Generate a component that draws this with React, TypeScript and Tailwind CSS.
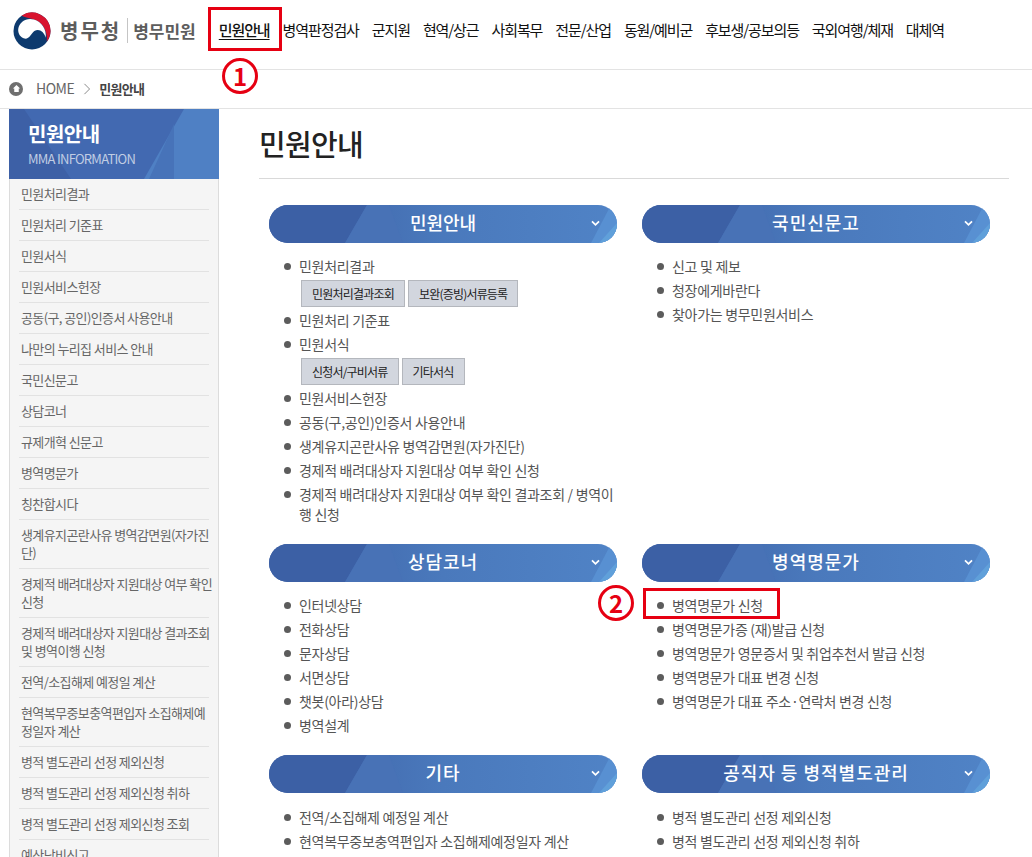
const font = "font-['Noto_Sans_CJK_KR','Noto_Sans',sans-serif]";

const navItems = ['병역판정검사', '군지원', '현역/상근', '사회복무', '전문/산업', '동원/예비군', '후보생/공보의등', '국외여행/체재', '대체역'];

const sideItems = [
  '민원처리결과',
  '민원처리 기준표',
  '민원서식',
  '민원서비스헌장',
  '공동(구, 공인)인증서 사용안내',
  '나만의 누리집 서비스 안내',
  '국민신문고',
  '상담코너',
  '규제개혁 신문고',
  '병역명문가',
  '칭찬합시다',
  '생계유지곤란사유 병역감면원(자가진단)',
  '경제적 배려대상자 지원대상 여부 확인 신청',
  '경제적 배려대상자 지원대상 결과조회 및 병역이행 신청',
  '전역/소집해제 예정일 계산',
  '현역복무중보충역편입자 소집해제예정일자 계산',
  '병적 별도관리 선정 제외신청',
  '병적 별도관리 선정 제외신청 취하',
  '병적 별도관리 선정 제외신청 조회',
  '예산낭비신고',
];

function Logo() {
  return (
    <svg viewBox="0 0 40 40" className="w-[38px] h-[38px]">
      <circle cx="20" cy="20" r="19.5" fill="#0d3a6e" />
      <path d="M9 4A19.5 19.5 0 0 1 39.5 20C39.5 24 38 28 35.5 31C36.5 22 33 13 25 9C19 6.5 13 6 9 4Z" fill="#d8132f" />
      <path d="M5.5 18C6.5 10 15 5.5 22 8C30 10.5 35.5 18 34.5 27C32.5 20 27 17 22.5 20C19 23 17 29 12 28C8 27 5 23 5.5 18Z" fill="#ffffff" />
    </svg>
  );
}

function Pill({ title, wide }: { title: string; wide?: boolean }) {
  return (
    <div className="relative h-[38px] rounded-[19px] overflow-hidden bg-gradient-to-r from-[#3d60a5] via-[#4a79bc] to-[#5083c6] flex items-center justify-center pb-[3px]">
      <svg viewBox="0 0 348 38" preserveAspectRatio="none" className="absolute inset-0 w-full h-full">
        <polygon points="0,0 98,0 76,38 0,38" fill="#3c60a5" />
        <polygon points="98,0 120,0 134,38 76,38" fill="#4872b6" />
        <polygon points="322,38 342,0 348,0 348,38" fill="#5890d2" />
        <polygon points="330,38 348,18 348,38" fill="#60a0da" />
      </svg>
      <span className={`relative text-white text-[18px] font-medium ${wide ? 'tracking-[1px]' : 'tracking-[0px]'}`}>{title}</span>
      <svg viewBox="0 0 10 8" className="absolute right-[17px] top-[15px] w-[9px] h-[7px]">
        <path d="M1 1.5L5 5.5L9 1.5" fill="none" stroke="#ffffff" strokeWidth="2" />
      </svg>
    </div>
  );
}

function Item({ children }: { children: React.ReactNode }) {
  return (
    <li className="relative pl-[30px] py-[2px] leading-[20px] text-[14px] tracking-[-0.3px] text-[#555]">
      <span className="absolute left-[15px] top-[9px] w-[7px] h-[7px] rounded-full bg-[#5c5c5c]" />
      {children}
    </li>
  );
}

function Btn({ children }: { children: React.ReactNode }) {
  return (
    <span className="h-[27px] px-[10px] flex items-center bg-[#d2d6de] border border-[#b4b7bd] text-[12px] tracking-[-0.8px] text-[#222]">
      {children}
    </span>
  );
}

function Section({ title, wide, low, items }: { title: string; wide?: boolean; low?: boolean; items: React.ReactNode[] }) {
  return (
    <section>
      <Pill title={title} wide={wide} />
      <ul className={low ? 'mt-[12px]' : 'mt-[11px]'}>
        {items.map((it, i) => (
          <Item key={i}>{it}</Item>
        ))}
      </ul>
    </section>
  );
}

export default function App() {
  return (
    <div className={`relative w-[1032px] h-[857px] overflow-hidden bg-white ${font}`}>
      <header className="h-[70px] border-b border-[#e3e3e3] flex items-center pl-[13px]">
        <div className="-mt-[8px] flex items-center">
          <Logo />
          <span className="ml-[9px] text-[20px] font-bold tracking-[2px] text-[#5d5d5d]">병무청</span>
          <span className="ml-[6px] mr-[5px] w-px h-[25px] bg-[#c5c5c5]" />
          <span className="text-[17px] font-bold tracking-[0px] text-[#5d5d5d]">병무민원</span>
        </div>
        <nav className="ml-[23px] flex items-center gap-[13px] text-[15px] tracking-[-1.1px] text-[#111] h-full pb-[8px]">
          <span className="underline underline-offset-[3px] font-medium">민원안내</span>
          {navItems.map((n) => (
            <span key={n}>{n}</span>
          ))}
        </nav>
      </header>

      <div className="h-[39px] border-b border-[#e3e3e3] flex items-center pl-[9px] pb-[1px] text-[14px] tracking-[-0.5px]">
        <span className="w-[14px] h-[14px] rounded-full bg-[#6f6f6f] flex items-center justify-center">
          <svg viewBox="0 0 10 10" className="w-[9px] h-[9px]">
            <path d="M5 1L1 5H2.5V9H7.5V5H9Z" fill="#ffffff" />
          </svg>
        </span>
        <span className="ml-[13px] text-[#666]">HOME</span>
        <svg viewBox="0 0 8 14" className="ml-[9px] w-[8px] h-[12px]">
          <path d="M1 1L7 7L1 13" fill="none" stroke="#777" strokeWidth="1" />
        </svg>
        <span className="ml-[8px] text-[#444] text-[13px] font-bold tracking-[-0.7px]">민원안내</span>
      </div>

      <div className="flex">
        <aside className="ml-[9px] w-[210px] shrink-0">
          <div className="relative h-[70px] overflow-hidden bg-[#4269b1] pl-[19px] pt-[10px]">
            <svg viewBox="0 0 210 70" className="absolute inset-0 w-full h-full">
              <polygon points="0,0 15,0 62,70 0,70" fill="#3d60a6" />
              <polygon points="135,70 175,0 210,0 210,70" fill="#4f80c4" />
              <polygon points="140,70 165,15 165,70" fill="#4773b9" />
            </svg>
            <div className="relative text-white text-[20px] leading-[30px] font-bold tracking-[-0.5px]">민원안내</div>
            <div className="relative text-[#c0cde3] text-[13px] leading-[18px] mt-[1px] tracking-[-0.75px]">MMA INFORMATION</div>
          </div>
          <ul className="bg-[#f5f5f5] border-x border-[#dcdcdc] px-[9px]">
            {sideItems.map((s) => (
              <li key={s} className="border-b border-[#e2e2e2] py-[6px] pl-[2px] text-[13px] leading-[18px] tracking-[-0.6px] text-[#666]">
                <div className="-mr-[4px]">{s}</div>
              </li>
            ))}
          </ul>
        </aside>

        <main className="ml-[40px] w-[750px]">
          <h1 className="h-[70px] border-b border-[#d9d9d9] pt-[12px] text-[29px] leading-[44px] font-medium tracking-[-0.7px] text-[#222]">민원안내</h1>
          <div className="mt-[26px] ml-[10px] grid grid-cols-[348px_348px] gap-x-[25px] gap-y-[18px]">
            <Section
              title="민원안내"
              items={[
                <>
                  민원처리결과
                  <div className="flex gap-[3px] ml-[2px] mt-[4px] -mb-[1px]"><Btn>민원처리결과조회</Btn><Btn>보완(증빙)서류등록</Btn></div>
                </>,
                '민원처리 기준표',
                <>
                  민원서식
                  <div className="flex gap-[3px] ml-[2px] mt-[4px] -mb-[1px]"><Btn>신청서/구비서류</Btn><Btn>기타서식</Btn></div>
                </>,
                '민원서비스헌장',
                '공동(구,공인)인증서 사용안내',
                '생계유지곤란사유 병역감면원(자가진단)',
                '경제적 배려대상자 지원대상 여부 확인 신청',
                '경제적 배려대상자 지원대상 여부 확인 결과조회 / 병역이행 신청',
              ]}
            />
            <Section title="국민신문고" wide items={['신고 및 제보', '청장에게바란다', '찾아가는 병무민원서비스']} />
            <Section title="상담코너" wide items={['인터넷상담', '전화상담', '문자상담', '서면상담', '챗봇(아라)상담', '병역설계']} />
            <Section
              title="병역명문가"
              wide
              items={['병역명문가 신청', '병역명문가증 (재)발급 신청', '병역명문가 영문증서 및 취업추천서 발급 신청', '병역명문가 대표 변경 신청', '병역명문가 대표 주소·연락처 변경 신청']}
            />
            <Section title="기타" wide low items={['전역/소집해제 예정일 계산', '현역복무중보충역편입자 소집해제예정일자 계산']} />
            <Section title="공직자 등 병적별도관리" wide low items={['병적 별도관리 선정 제외신청', '병적 별도관리 선정 제외신청 취하']} />
          </div>
        </main>
      </div>

      {/* 안내 표시 */}
      <div className="absolute left-[208px] top-[7px] w-[74px] h-[44px] border-[3px] border-[#e60012]" />
      <div className="absolute left-[222px] top-[58px] w-[36px] h-[36px] rounded-full border-[3px] border-[#e60012] bg-white flex items-center justify-center text-[24px] font-bold text-[#e60012] leading-none">1</div>
      <div className="absolute left-[643px] top-[588px] w-[137px] h-[31px] border-[3px] border-[#e60012]" />
      <div className="absolute left-[598px] top-[585px] w-[36px] h-[36px] rounded-full border-[3px] border-[#e60012] bg-white flex items-center justify-center text-[24px] font-bold text-[#e60012] leading-none">2</div>
    </div>
  );
}
